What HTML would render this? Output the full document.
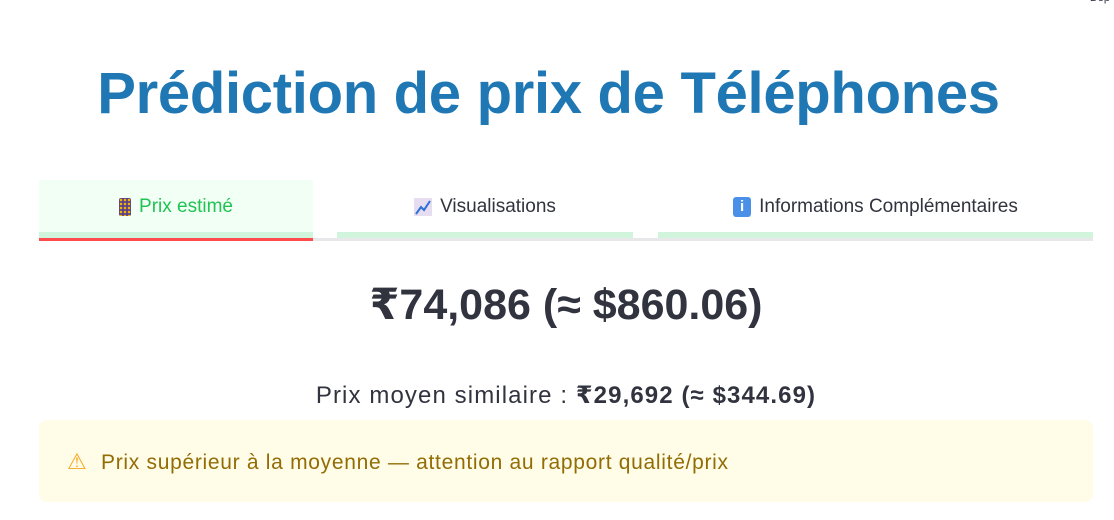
<!DOCTYPE html>
<html><head><meta charset="utf-8"><style>
body{margin:0;width:1114px;height:520px;background:#fff;font-family:"Liberation Sans","DejaVu Sans",sans-serif;color:#31333f;position:relative;overflow:hidden}
.a{position:absolute}
h1{position:absolute;left:0;width:1097px;top:60px;margin:0;text-align:center;font-size:58px;font-weight:bold;color:#1f77b4;letter-spacing:-0.3px}
.tab{position:absolute;top:181px;height:52px;display:flex;align-items:center;justify-content:center;font-size:19px}
.bar{position:absolute;top:232px;height:6px;background:#d1f5dc}
</style></head><body>
<div class="a" style="right:4px;top:-8px;font-size:11px;color:#31333f">Dep</div>
<h1>Prédiction de prix de Téléphones</h1>
<div class="a" style="left:39px;top:238px;width:1054px;height:3px;background:#e8e8ea"></div>
<div class="a" style="left:39px;top:180px;width:274px;height:52px;background:#f2fff5"></div>
<div class="tab" style="left:39px;width:274px;color:#21c354"><span style="display:inline-block;width:12px;height:18px;background:#5a3f8a;border-radius:2px;margin-right:8px;background-image:radial-gradient(#f5b800 1px,transparent 1.5px);background-size:4px 4px"></span>Prix estimé</div>
<div class="tab" style="left:337px;width:296px"><span style="display:inline-block;width:18px;height:18px;background:#e6ddf0;margin-right:8px;position:relative"><svg width="18" height="18" style="position:absolute;left:0;top:0"><path d="M2 16 L7 9 L10 12 L16 3" stroke="#2f6fd8" stroke-width="2" fill="none"/></svg></span>Visualisations</div>
<div class="tab" style="left:658px;width:435px"><span style="display:inline-block;width:18px;height:20px;background:#4a90e8;border-radius:3px;margin-right:8px;color:#fff;font-size:15px;font-weight:bold;text-align:center;line-height:20px">i</span>Informations Complémentaires</div>
<div class="bar" style="left:39px;width:274px"></div>
<div class="bar" style="left:337px;width:296px"></div>
<div class="bar" style="left:658px;width:435px"></div>
<div class="a" style="left:39px;top:238px;width:274px;height:3px;background:#ff4b4b"></div>
<div class="a" style="left:0;width:1132px;top:280px;text-align:center;font-size:43px;font-weight:bold">₹74,086 (≈ $860.06)</div>
<div class="a" style="left:0;width:1132px;top:381px;text-align:center;font-size:24px;letter-spacing:1.1px">Prix moyen similaire : <b>₹29,692 (≈ $344.69)</b></div>
<div class="a" style="left:39px;top:420px;width:1054px;height:82px;background:#fffce7;border-radius:8px"></div>
<div class="a" style="left:67px;top:449px;font-size:21px;color:#926c05;letter-spacing:0.7px"><span style="color:#f5a623;display:inline-block;width:34px;font-size:22px">⚠</span>Prix supérieur à la moyenne — attention au rapport qualité/prix</div>
</body></html>
